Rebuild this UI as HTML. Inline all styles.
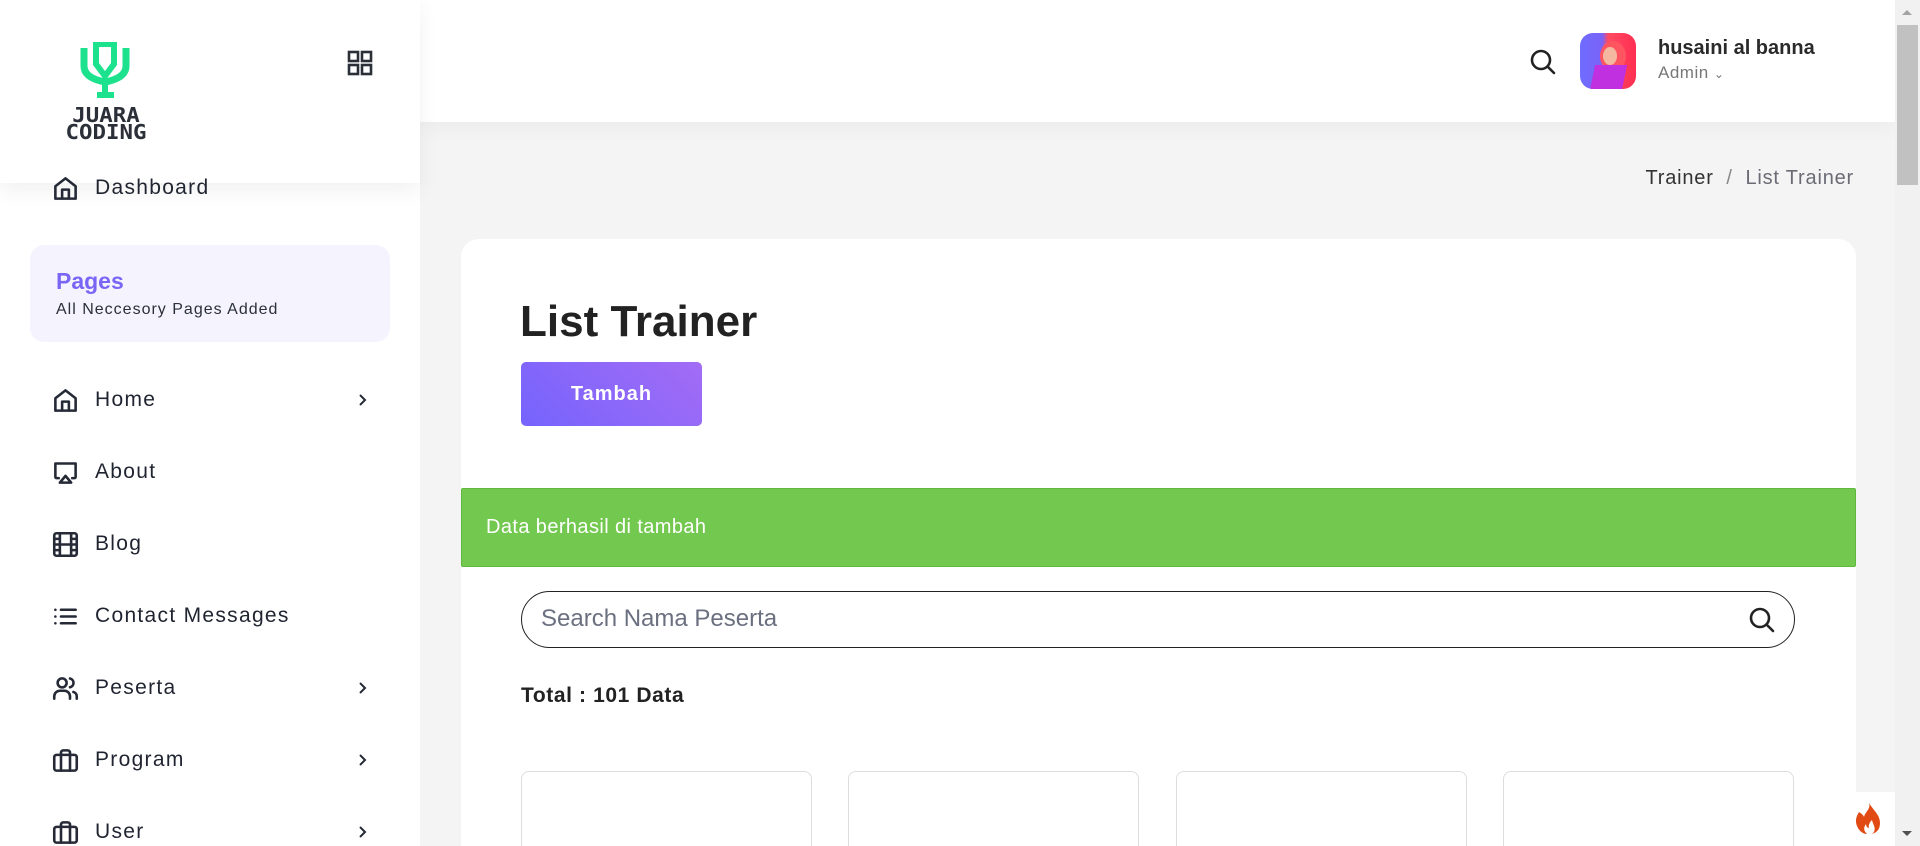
<!DOCTYPE html>
<html style="height:846px;overflow:hidden"><head><meta charset="utf-8">
<style>
*{box-sizing:border-box;margin:0;padding:0}
html,body{width:1920px;height:846px;overflow:hidden}
body{background:#f4f4f4;font-family:"Liberation Sans",sans-serif;color:#1f2430;position:relative}
.abs{position:absolute}
.side{left:0;top:0;width:420px;height:846px;background:#fff}
.logohdr{left:0;top:0;width:420px;height:183px;background:#fff;box-shadow:0 8px 20px rgba(0,0,0,.06);z-index:2}
.top{left:420px;top:0;width:1475px;height:122px;background:#fff;box-shadow:0 6px 20px rgba(0,0,0,.04)}
.nav{left:52px;font-size:21px;letter-spacing:1.3px;color:#1f2430;display:flex;align-items:center;gap:16px;height:30px}
.nav svg{width:27px;height:27px;fill:none;stroke:#252a36;stroke-width:2.3;stroke-linecap:round;stroke-linejoin:round}
.chev{left:355px;width:14px;height:14px}
.card{left:461px;top:239px;width:1395px;height:607px;background:#fff;border-radius:18px 18px 0 0}
.sc{top:771px;width:291px;height:75px;border:1px solid #ddd;border-bottom:none;border-radius:8px 8px 0 0;background:#fff}
</style></head><body>
<div class="abs side"></div>
<div class="abs logohdr">
  <svg class="abs" style="left:80px;top:42px" width="50" height="58" viewBox="0 0 50 58">
    <path d="M4 6 V24 Q4 36 25 40 Q46 36 46 24 V6" fill="none" stroke="#1de28d" stroke-width="7"/>
    <path d="M16 2 H34 V22 L25 34 L16 22 Z" fill="none" stroke="#1de28d" stroke-width="6"/>
    <rect x="17" y="50" width="17" height="6" fill="#1de28d"/>
    <rect x="22" y="38" width="6" height="12" fill="#1de28d"/>
  </svg>
  <div class="abs" style="left:50px;top:107px;width:112px;font:bold 20px/17px 'DejaVu Sans Mono',monospace;color:#2b2f38;text-align:center;transform:scaleX(1.12);transform-origin:center">JUARA<br>CODING</div>
  <svg class="abs" style="left:347px;top:50px" width="26" height="26" viewBox="0 0 26 26" fill="none" stroke="#2b2f38" stroke-width="2.6"><rect x="2" y="2" width="9" height="9"/><rect x="15" y="2" width="9" height="9"/><rect x="2" y="15" width="9" height="9"/><rect x="15" y="15" width="9" height="9"/></svg>
  <div class="abs nav" style="top:173px"><svg viewBox="0 0 24 24"><path d="M3 21V10L12 3l9 7v11zM9 21v-8h6v8"/></svg>Dashboard</div>
</div>
<div class="abs" style="left:30px;top:245px;width:360px;height:97px;background:#f5f3fe;border-radius:14px"></div>
<div class="abs" style="left:56px;top:268px;font-size:23px;font-weight:bold;color:#7a66f5">Pages</div>
<div class="abs" style="left:56px;top:301px;font-size:16px;letter-spacing:1px;color:#2b2f38">All Neccesory Pages Added</div>

<div class="abs nav" style="top:385px"><svg viewBox="0 0 24 24"><path d="M3 21V10L12 3l9 7v11zM9 21v-8h6v8"/></svg>Home</div>
<div class="abs nav" style="top:457px"><svg viewBox="0 0 24 24"><path d="M6 17H4a1 1 0 0 1-1-1V4h18v12a1 1 0 0 1-1 1h-2M12 15l5 6H7z"/></svg>About</div>
<div class="abs nav" style="top:529px"><svg viewBox="0 0 24 24"><rect x="2" y="2" width="20" height="20" rx="2"/><path d="M7 2v20M17 2v20M2 12h20M2 7h5M2 17h5M17 17h5M17 7h5"/></svg>Blog</div>
<div class="abs nav" style="top:601px"><svg viewBox="0 0 24 24"><path d="M8 6h13M8 12h13M8 18h13M3 6h.01M3 12h.01M3 18h.01"/></svg>Contact Messages</div>
<div class="abs nav" style="top:673px"><svg viewBox="0 0 24 24"><path d="M2 21v-2a5 5 0 0 1 5-5h4a5 5 0 0 1 5 5v2M16 3.1a4 4 0 0 1 0 7.8M22 21v-2a4 4 0 0 0-3-3.9"/><circle cx="9" cy="7" r="4"/></svg>Peserta</div>
<div class="abs nav" style="top:745px"><svg viewBox="0 0 24 24"><rect x="2" y="7" width="20" height="14" rx="2"/><path d="M16 21V5a2 2 0 0 0-2-2h-4a2 2 0 0 0-2 2v16"/></svg>Program</div>
<div class="abs nav" style="top:817px"><svg viewBox="0 0 24 24"><rect x="2" y="7" width="20" height="14" rx="2"/><path d="M16 21V5a2 2 0 0 0-2-2h-4a2 2 0 0 0-2 2v16"/></svg>User</div>
<svg class="abs chev" style="top:393px" viewBox="0 0 14 14" fill="none" stroke="#252a36" stroke-width="2"><path d="M5 2l5 5-5 5"/></svg>
<svg class="abs chev" style="top:681px" viewBox="0 0 14 14" fill="none" stroke="#252a36" stroke-width="2"><path d="M5 2l5 5-5 5"/></svg>
<svg class="abs chev" style="top:753px" viewBox="0 0 14 14" fill="none" stroke="#252a36" stroke-width="2"><path d="M5 2l5 5-5 5"/></svg>
<svg class="abs chev" style="top:825px" viewBox="0 0 14 14" fill="none" stroke="#252a36" stroke-width="2"><path d="M5 2l5 5-5 5"/></svg>

<div class="abs top"></div>
<svg class="abs" style="left:1529px;top:48px" width="28" height="28" viewBox="0 0 28 28" fill="none" stroke="#222" stroke-width="2.6" stroke-linecap="round"><circle cx="12" cy="12" r="9"/><path d="M19 19l6 6"/></svg>
<div class="abs" style="left:1580px;top:33px;width:56px;height:56px;border-radius:13px;overflow:hidden;background:linear-gradient(90deg,#6f6cff 0%,#7a63f7 40%,#ff4a62 50%,#ff2f52 100%)">
  <div class="abs" style="left:20px;top:8px;width:26px;height:30px;border-radius:50%;background:#ff5560"></div>
  <div class="abs" style="left:23px;top:14px;width:14px;height:18px;border-radius:50%;background:#f4b8a0"></div>
  <div class="abs" style="left:12px;top:32px;width:32px;height:30px;background:#c02fe0;transform:skewX(-12deg)"></div>
</div>
<div class="abs" style="left:1658px;top:37px;font-size:20px;font-weight:bold;color:#2a2a2a">husaini al banna</div>
<div class="abs" style="left:1658px;top:63px;font-size:17px;color:#777;letter-spacing:.5px">Admin <span style="font-size:12px">&#8964;</span></div>

<div class="abs" style="left:1636px;top:167px;width:218px;text-align:right;font-size:20px;letter-spacing:.8px;color:#333;white-space:nowrap">Trainer &nbsp;<span style="color:#888">/</span>&nbsp; <span style="color:#6b6b75">List Trainer</span></div>

<div class="abs card"></div>
<div class="abs" style="left:520px;top:297px;font-size:44px;font-weight:bold;color:#222">List Trainer</div>
<div class="abs" style="left:521px;top:362px;width:181px;height:64px;border-radius:5px;background:linear-gradient(45deg,#7564fd,#a36cf5);color:#fff;font-size:20px;font-weight:bold;letter-spacing:1px;text-align:center;line-height:64px">Tambah</div>
<div class="abs" style="left:461px;top:488px;width:1395px;height:79px;background:#73c84f;border:1px solid #5fb93a;border-radius:2px;color:#fff;font-size:20px;letter-spacing:.4px;padding-left:24px;line-height:77px">Data berhasil di tambah</div>
<div class="abs" style="left:521px;top:591px;width:1274px;height:57px;border:1.5px solid #222;border-radius:29px;font-size:24px;color:#6b7080;padding-left:19px;line-height:54px">Search Nama Peserta</div>
<svg class="abs" style="left:1748px;top:606px" width="28" height="28" viewBox="0 0 28 28" fill="none" stroke="#222" stroke-width="2.6" stroke-linecap="round"><circle cx="12" cy="12" r="9"/><path d="M19 19l6 6"/></svg>
<div class="abs" style="left:521px;top:684px;font-size:21px;font-weight:bold;letter-spacing:.6px;color:#222">Total : 101 Data</div>
<div class="abs sc" style="left:521px"></div>
<div class="abs sc" style="left:848px"></div>
<div class="abs sc" style="left:1176px"></div>
<div class="abs sc" style="left:1503px"></div>

<div class="abs" style="left:1841px;top:792px;width:54px;height:54px;background:#fff"></div>
<svg class="abs" style="left:1855px;top:803px" width="26" height="32" viewBox="0 0 26 32"><path d="M14 0C16 6 10 9 9 14 8 11 5 10 4 9 1 14 0 18 2 23c2 5 6 8 10 8-3-3-4-6-1-10 0 3 2 4 3 4-1-3 1-6 3-8 1 5 4 7 2 12-1 1-2 2-3 2 6-1 9-5 9-11 0-8-6-12-11-20z" fill="#e24a14"/></svg>

<div class="abs" style="left:1895px;top:0;width:25px;height:846px;background:#f1f1f1"></div>
<div class="abs" style="left:1897px;top:25px;width:21px;height:160px;background:#c1c1c1"></div>
<div class="abs" style="left:1902px;top:10px;width:0;height:0;border-left:5px solid transparent;border-right:5px solid transparent;border-bottom:5px solid #a3a3a3"></div>
<div class="abs" style="left:1902px;top:831px;width:0;height:0;border-left:5px solid transparent;border-right:5px solid transparent;border-top:5px solid #505050"></div>
</body></html>
